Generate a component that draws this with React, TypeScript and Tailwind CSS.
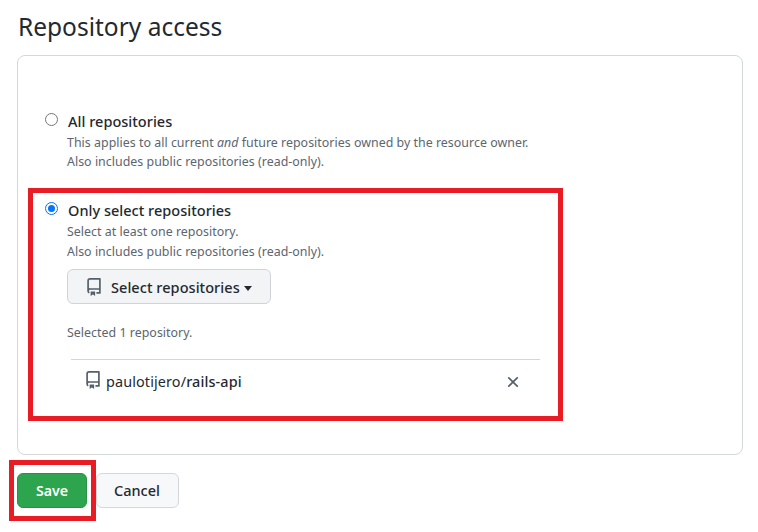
import type { ReactNode } from "react";

function RepoIcon({ className = "" }: { className?: string }) {
  return (
    <svg viewBox="0 0 16 16" width="18" height="18" fill="#57606a" className={`shrink-0 ${className}`} aria-hidden="true">
      <path d="M2 2.5A2.5 2.5 0 0 1 4.5 0h8.75a.75.75 0 0 1 .75.75v12.5a.75.75 0 0 1-.75.75h-2.5a.75.75 0 0 1 0-1.5h1.75v-2h-8a1 1 0 0 0-.714 1.7.75.75 0 1 1-1.072 1.05A2.495 2.495 0 0 1 2 11.5Zm10.5-1h-8a1 1 0 0 0-1 1v6.708A2.486 2.486 0 0 1 4.5 9h8ZM5 12.25a.25.25 0 0 1 .25-.25h3.5a.25.25 0 0 1 .25.25v3.25a.25.25 0 0 1-.4.2l-1.45-1.087a.249.249 0 0 0-.3 0L5.4 15.7a.25.25 0 0 1-.4-.2Z" />
    </svg>
  );
}

function Radio({ checked = false }: { checked?: boolean }) {
  return (
    <span
      role="radio"
      aria-checked={checked}
      className={`mt-[2px] mr-[9px] flex size-[13px] shrink-0 items-center justify-center rounded-full border bg-white ${
        checked ? "border-[#0075ff]" : "border-[#767676]"
      }`}
    >
      {checked && <span className="size-[7px] rounded-full bg-[#0075ff]" />}
    </span>
  );
}

function Title({ children }: { children: ReactNode }) {
  return <div className="ml-px h-5 text-[14.5px] leading-5 font-medium tracking-[0.02px] text-[#24292f]">{children}</div>;
}

function Note({ children, className = "h-5 leading-5" }: { children: ReactNode; className?: string }) {
  return <p className={`text-[12.4px] tracking-[0.025px] whitespace-nowrap text-[#5d656e] ${className}`}>{children}</p>;
}

export default function App() {
  return (
    <div className="h-[532px] w-[758px] overflow-hidden bg-white pl-[17px] font-['Noto_Sans','Open_Sans',sans-serif] text-[#24292f]">
      <h1 className="mt-[11px] ml-px h-8 text-[24.5px] leading-8">Repository access</h1>

      <section className="mt-3 h-[400px] w-[726px] rounded-lg border border-[#d3d8dc]">
        <div className="mt-[55px] ml-[27px] flex">
          <Radio />
          <div>
            <Title>All repositories</Title>
            <Note className="mt-[2px] h-[19px] leading-5">
              This applies to all current <em>and</em> future repositories owned by the resource owner.
            </Note>
            <Note className="h-[19px] leading-[19px]">Also includes public repositories (read-only).</Note>
          </div>
        </div>

        <div className="mt-[17px] ml-[10px] h-[233px] w-[535px] border-5 border-[#e81c24] pt-[7px] pl-3">
          <div className="flex">
            <Radio checked />
            <div>
              <Title>Only select repositories</Title>
              <Note className="mt-[2px] h-5 leading-5">Select at least one repository.</Note>
              <Note>Also includes public repositories (read-only).</Note>
              <button className="mt-[7px] flex h-[35px] w-[204px] items-center rounded-md border border-[#d0d4d9] bg-[#f3f4f6] pl-[17px] text-[14.5px] font-medium whitespace-nowrap">
                <RepoIcon />
                <span className="ml-2 pt-[2px] tracking-[0.05px]">Select repositories</span>
                <span className="mt-[3px] ml-1 border-x-[4.5px] border-t-5 border-x-transparent border-t-[#24292f]" />
              </button>
              <Note className="mt-[19px] h-5 leading-5">Selected 1 repository.</Note>
              <div className="mt-4 ml-1 flex h-[46px] w-[469px] items-center border-t border-[#d0d7de] pr-[18px] pl-[13px] text-[14.4px]">
                <RepoIcon className="-mt-[5px]" />
                <span className="ml-[4px] pb-[2px] tracking-[0.12px]">
                  paulotijero/<span className="font-medium">rails-api</span>
                </span>
                <svg viewBox="0 0 16 16" width="18" height="18" fill="#57606a" className="-mt-px ml-auto" aria-hidden="true">
                  <path d="M3.72 3.72a.75.75 0 0 1 1.06 0L8 6.94l3.22-3.22a.75.75 0 1 1 1.06 1.06L9.06 8l3.22 3.22a.75.75 0 1 1-1.06 1.06L8 9.06l-3.22 3.22a.75.75 0 0 1-1.06-1.06L6.94 8 3.72 4.78a.75.75 0 0 1 0-1.06Z" />
                </svg>
              </div>
            </div>
          </div>
        </div>
      </section>

      <div className="mt-[5px] -ml-2 flex items-center">
        <div className="flex h-[61px] w-[87px] items-center border-5 border-[#e81c24] pl-[3px]">
          <button className="h-[35px] w-[70px] rounded-md border border-[#2a9147] bg-[#2da44e] text-[14.2px] font-semibold text-white">
            Save
          </button>
        </div>
        <button className="h-[35px] w-[83px] rounded-md border border-[#d5d8da] bg-[#f6f8fa] pr-px text-[14.5px] font-medium">
          Cancel
        </button>
      </div>
    </div>
  );
}
